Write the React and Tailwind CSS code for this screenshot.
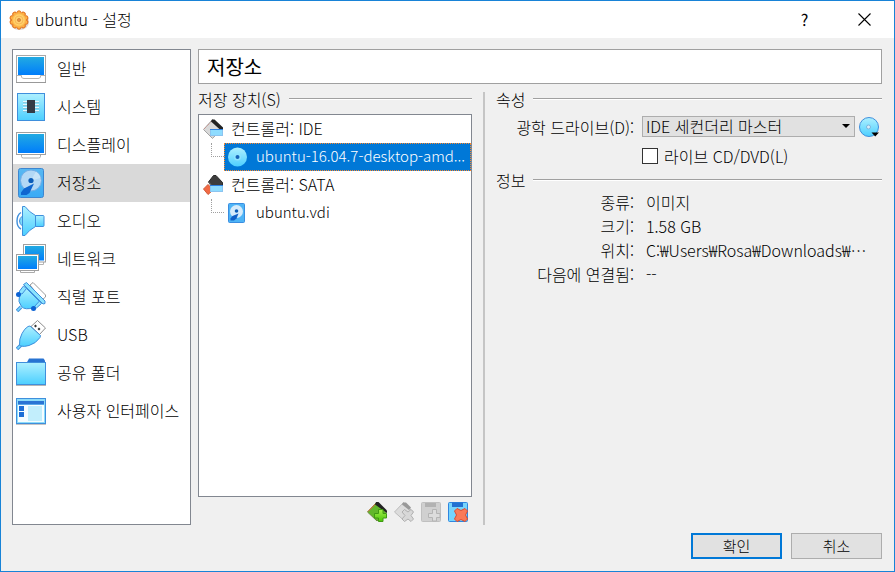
import React from 'react';

const BLUE = '#3f8fdc';

function Defs() {
  return (
    <svg width="0" height="0" className="absolute" aria-hidden="true">
      <defs>
        <linearGradient id="screen" x1="0" y1="0" x2="0" y2="1">
          <stop offset="0" stopColor="#22aae2" />
          <stop offset="1" stopColor="#007dfb" />
        </linearGradient>
        <linearGradient id="sky" x1="0" y1="0" x2="0" y2="1">
          <stop offset="0" stopColor="#aef0ff" />
          <stop offset="1" stopColor="#4ccfff" />
        </linearGradient>
        <linearGradient id="drive" x1="0" y1="0" x2="0" y2="1">
          <stop offset="0" stopColor="#58b8f2" />
          <stop offset="1" stopColor="#3aaaf5" />
        </linearGradient>
        <linearGradient id="green" x1="0" y1="0" x2="0" y2="1">
          <stop offset="0" stopColor="#a4f04a" />
          <stop offset="1" stopColor="#4cc40c" />
        </linearGradient>
        <radialGradient id="gear">
          <stop offset="0" stopColor="#ffe79a" />
          <stop offset="0.7" stopColor="#ffcf66" />
          <stop offset="1" stopColor="#f9a43a" />
        </radialGradient>
      </defs>
    </svg>
  );
}

function Icon({ size = 30, children }) {
  return (
    <svg width={size} height={size} viewBox={`0 0 ${size} ${size}`} className="block shrink-0" aria-hidden="true">
      {children}
    </svg>
  );
}

const GeneralIcon = () => (
  <Icon>
    <rect x="0.5" y="1.5" width="29" height="27" fill="#fff" stroke="#a8a8a8" />
    <rect x="2" y="3" width="26" height="18" fill="url(#screen)" />
    <path d="M1 21.5H5.5V23Q6 24.5 8 24.5H22Q24 24.5 24.5 23V21.5H29" fill="#fff" stroke="#b4b4b4" />
    <path d="M0 28.5H30" stroke="#999" />
  </Icon>
);

const SystemIcon = () => (
  <Icon>
    <rect x="1.5" y="1.5" width="27" height="27" fill="url(#sky)" stroke={BLUE} />
    <path d="M7 9.5H23M7 12.5H23M7 15.5H23M7 18.5H23" stroke="#e6f8ff" />
    <path d="M7 10.5H23M7 13.5H23M7 16.5H23M7 19.5H23" stroke="#8db4c6" strokeWidth="0.6" />
    <rect x="11" y="8" width="8" height="13" fill="#343b47" />
  </Icon>
);

const DisplayIcon = () => (
  <Icon>
    <path d="M5.5 24V26.5Q5.5 28 7.5 28H22.5Q24.5 28 24.5 26.5V24" fill="#fff" stroke="#aaa" />
    <rect x="0.5" y="2.5" width="29" height="22" fill="#fff" stroke="#a0a0a0" />
    <rect x="2" y="4" width="26" height="19" fill="url(#screen)" />
  </Icon>
);

const StorageIcon = () => (
  <Icon>
    <rect x="2.5" y="0.5" width="25" height="29" rx="2" fill="url(#drive)" stroke="#3d86d0" />
    <circle cx="15" cy="12.5" r="10.5" fill="#b3d8f5" stroke="#72ade6" />
    <path d="M15 12.5L20 3.5A10 10 0 0 1 24.5 10Z" fill="#d2e9fa" opacity="0.7" />
    <circle cx="15" cy="12.5" r="2.6" fill="#0b5cb8" />
    <path d="M18 15.5L8 20.5L5 24.5V27H10.5L13.5 25Z" fill="#0f66d0" />
  </Icon>
);

const AudioIcon = () => (
  <Icon>
    <path d="M5 6.5Q1 9 1 15T5 23" fill="none" stroke={BLUE} strokeWidth="1.4" />
    <path d="M6.5 10Q3.5 12 3.5 15T6.5 20Z" fill="#7edbfb" stroke={BLUE} />
    <rect x="19" y="9.5" width="9" height="11" rx="1" fill="url(#sky)" stroke={BLUE} />
    <path d="M6.5 0.5H9Q13 6 19.5 9.5V20.5Q13 24 9 29.5H6.5Z" fill="url(#sky)" stroke={BLUE} />
  </Icon>
);

const NetworkIcon = () => (
  <Icon>
    <path d="M21.5 18V20.5H27.5V18" fill="#fff" stroke="#b4b4b4" />
    <rect x="7.5" y="0.5" width="22" height="17.5" fill="#fff" stroke="#a0a0a0" />
    <rect x="9" y="2" width="19" height="14.5" fill="url(#screen)" />
    <path d="M4.5 26V28.5H18.5V26" fill="#fff" stroke="#aaa" />
    <rect x="0.5" y="10.5" width="22" height="16" fill="#fff" stroke="#a0a0a0" />
    <rect x="2" y="12" width="19" height="13" fill="url(#screen)" />
  </Icon>
);

const SerialIcon = () => (
  <Icon>
    <path d="M14 3L17 0.5L29.5 13V15L26 18Z" fill="#fff" stroke="#9a9a9a" />
    <path d="M5 25L1 29" stroke={BLUE} strokeWidth="3.6" />
    <path d="M5 25L1.5 28.5" stroke="#7ddcff" strokeWidth="1.6" />
    <path d="M10 6L23.500 19.500Q23 24 18 25.5Q9 28.500 5.5 24.500Q1.5 20 3.5 13.500Q6 7.500 10 6Z" fill="url(#sky)" stroke={BLUE} />
    <path d="M3.5 11.5V9L7.500 4L10.5 6.500L6 12ZM18.5 24.5L23.5 19L25.500 21.500L20.500 26Z" fill="#8de3ff" stroke={BLUE} />
    <path d="M7.5 2.5L10.5 0.5L29 19V21.500L27 22Z" fill="#8ae2fd" stroke={BLUE} />
    <circle cx="2.5" cy="12.5" r="2.5" fill="#0d63d4" />
    <circle cx="17.5" cy="26.5" r="2.5" fill="#0d63d4" />
  </Icon>
);

const UsbIcon = () => (
  <Icon>
    <path d="M21.5 0.5L29.5 8L23.5 14.5L15 6.5Z" fill="#fff" stroke="#8c8c8c" />
    <path d="M18 6L19.5 4.500L21 6L19.5 7.500ZM21.5 9L23 7.5L24.5 9L23 10.5Z" fill="#333" />
    <path d="M5 25L1 29" stroke={BLUE} strokeWidth="3.6" />
    <path d="M5 25L1.5 28.5" stroke="#7ddcff" strokeWidth="1.6" />
    <path d="M12 6.5L14 6L24.5 15.5L24 17.5Q20 23.5 13 25.5Q8 27 4.5 26L3.5 25Q3 19 6 13.5Q8.5 8.5 12 6.5Z" fill="url(#sky)" stroke={BLUE} />
  </Icon>
);

const FolderIcon = () => (
  <Icon>
    <path d="M10.5 5L13 0.5H27.5L29 2.5V6H10.5Z" fill="#2773d2" />
    <rect x="0.5" y="4.5" width="29" height="22" fill="url(#sky)" stroke={BLUE} />
    <path d="M0 27.5H30" stroke="#b5b5b5" />
  </Icon>
);

const InterfaceIcon = () => (
  <Icon>
    <rect x="0.5" y="2.5" width="29" height="25" fill="#8cdcfa" stroke={BLUE} />
    <rect x="2" y="5" width="26" height="3.5" fill="#2a74d4" />
    <rect x="2" y="9" width="26" height="17" fill="#f6fdff" />
    <rect x="3" y="10" width="5" height="5" fill="#1d6fd6" />
    <rect x="3" y="16" width="5" height="5" fill="#1d6fd6" />
    <rect x="12" y="10" width="14" height="15" fill="#c2eefc" />
    <path d="M0 28.5H30" stroke="#c4c4c4" />
  </Icon>
);

const IdeIcon = () => (
  <Icon size={20}>
    <path d="M9.5 0.5L19 9.5L9.5 19.5L0.5 10.5Z" fill="#d9d9d9" stroke="#a4a4a4" />
    <path d="M1 10L9.5 1.5" stroke="#d08a80" strokeDasharray="1 1" />
    <path d="M9 0.5H11.5L20 8.5V11L17.5 11L8 2.5Z" fill="#222" />
    <rect x="7.5" y="10.5" width="12" height="6" fill="#8edcff" stroke="#8cc4f0" />
    <path d="M7 10.5H20" stroke="#2c7fe0" />
  </Icon>
);

const SataIcon = () => (
  <Icon size={20}>
    <path d="M10.5 0.5H13L19.5 7.5V12H9L5.5 7Z" fill="#3d3d3d" stroke="#2a2a2a" />
    <path d="M5.500 7L9 11" stroke="#777" />
    <path d="M0.5 14L5 9.5L9 13.5V16L5 19.5Z" fill="#f26a44" stroke="#cf5a38" />
    <rect x="7.5" y="10.5" width="12" height="6" fill="#8edcff" stroke="#8cc4f0" />
    <path d="M7 10.5H20" stroke="#2c7fe0" />
  </Icon>
);

const DiscIcon = () => (
  <Icon size={20}>
    <circle cx="9.5" cy="10" r="9.5" fill="url(#sky)" />
    <circle cx="9.5" cy="10" r="3.5" fill="#8fe4ff" />
    <circle cx="9.5" cy="10" r="2" fill="#1663b8" />
  </Icon>
);

const DiskIcon = () => (
  <Icon size={20}>
    <rect x="0.5" y="0.5" width="16" height="19" rx="1" fill="#4eb4f6" stroke="#3a8de0" />
    <circle cx="8.5" cy="8.5" r="6.5" fill="#d5ebfb" />
    <circle cx="8.5" cy="8" r="1.8" fill="#0b5cb8" />
    <path d="M10.5 10.5L4.5 13L2.5 15.5V17.5H6L8.500 15.500Z" fill="#0f5fc8" />
  </Icon>
);

const AddControllerIcon = () => (
  <Icon size={20}>
    <path d="M9.5 0.5L19.5 10L10 19L0.5 10Z" fill="#62b72c" stroke="#6b8b42" />
    <path d="M1 9.5L9 1.5" stroke="#e06a3c" />
    <path d="M9 0H11.5L20 8.5V11L8 2.5Z" fill="#222" />
    <path d="M11.5 7.500H16V11.500H19.5V16H16V19.5H11.500V16H7.500V11.500H11.500Z" fill="url(#green)" stroke="#3f9a12" />
  </Icon>
);

const RemoveControllerIcon = () => (
  <Icon size={20}>
    <path d="M9.5 0.5L19 9.5L10 18.5L0.5 10Z" fill="#dcdcdc" stroke="#bcbcbc" />
    <path d="M9 0.5H12L17 5.5L15 8L8 2.5Z" fill="#999" />
    <path d="M10.5 7.5L14 10L17 7.5L19.5 10L17 13.500L19.5 17L17 19.5L14 17L10.500 19.5L8 17L11 13.500L8 10Z" fill="#d8d8d8" stroke="#b0b0b0" />
  </Icon>
);

const AddAttachmentIcon = () => (
  <Icon size={20}>
    <rect x="0.5" y="0.5" width="19" height="19" rx="1" fill="#d0d0d0" stroke="#c0c0c0" />
    <rect x="4" y="1" width="11" height="4" fill="#b2b2b2" />
    <path d="M11.500 7.5H15.5V11.5H19V15.500H15.5V19H11.500V15.500H7.500V11.5H11.500Z" fill="#dcdcdc" stroke="#b4b4b4" />
  </Icon>
);

const RemoveAttachmentIcon = () => (
  <Icon size={20}>
    <rect x="0.5" y="0.5" width="19" height="19" rx="1" fill="#76d4fc" stroke="#2f86e0" />
    <rect x="4" y="0.5" width="11" height="4.5" fill="#2270d0" />
    <path d="M9 6.5L13 8.5L17 6.5L19.5 9L17.5 13L19.5 17L17 19.5L13 17.5L9 19.5L6.5 17L8.5 13L6.5 9Z" fill="#f97a58" stroke="#e0492a" />
  </Icon>
);

const GearIcon = () => (
  <Icon size={20}>
    <ellipse cx="10.5" cy="12" rx="9.5" ry="8" fill="#b9a9a0" opacity="0.5" />
    {[0, 36, 72, 108, 144, 180, 216, 252, 288, 324].map((a) => (
      <circle key={a} cx="10" cy="2.8" r="2" fill="#ffb347" stroke="#e0701c" transform={`rotate(${a} 10 10)`} />
    ))}
    <circle cx="10" cy="10" r="7.4" fill="url(#gear)" />
    <circle cx="10" cy="10" r="4" fill="#ffd070" stroke="#f5b050" strokeWidth="0.8" />
    <circle cx="10" cy="10" r="1.6" fill="#e09048" stroke="#c97326" strokeWidth="0.6" />
  </Icon>
);

const categories = [
  ['일반', GeneralIcon],
  ['시스템', SystemIcon],
  ['디스플레이', DisplayIcon],
  ['저장소', StorageIcon],
  ['오디오', AudioIcon],
  ['네트워크', NetworkIcon],
  ['직렬 포트', SerialIcon],
  ['USB', UsbIcon],
  ['공유 폴더', FolderIcon],
  ['사용자 인터페이스', InterfaceIcon],
];

const tools = [
  ['컨트롤러 추가', AddControllerIcon, false],
  ['컨트롤러 삭제', RemoveControllerIcon, true],
  ['연결 추가', AddAttachmentIcon, true],
  ['연결 삭제', RemoveAttachmentIcon, false],
];

const details = [
  ['종류:', '이미지'],
  ['크기:', '1.58 GB'],
  ['위치:', 'C:₩Users₩Rosa₩Downloads₩⋯'],
  ['다음에 연결됨:', '--'],
];

function GroupTitle({ children }) {
  return (
    <div className="flex h-[14px] items-center gap-2">
      <h2 className="shrink-0 text-[16px] leading-none whitespace-nowrap">{children}</h2>
      <div className="h-[2px] flex-1 border-t border-[#a0a0a0] bg-white" />
    </div>
  );
}

function Controller({ icon: Glyph, label, children }) {
  return (
    <li role="treeitem" aria-expanded="true">
      <div className="flex h-7 items-center gap-2 pl-1">
        <Glyph />
        <span className="pb-0.5 text-[16px]">{label}</span>
      </div>
      <ul role="group">{children}</ul>
    </li>
  );
}

function Attachment({ icon: Glyph, label, selected }) {
  return (
    <li role="treeitem" aria-selected={!!selected} className="flex h-7 pl-3">
      <span className="h-[14px] w-[13px] shrink-0 border-b border-l border-dotted border-[#a0a0a0]" />
      <div
        className={
          selected
            ? 'flex min-w-0 flex-1 items-center gap-2 border border-dotted border-[#ff8728] bg-[#0078d7] pr-0.5 pl-[3px] text-white'
            : 'flex min-w-0 flex-1 items-center gap-2 border border-transparent pr-0.5 pl-[3px]'
        }
      >
        <Glyph />
        <span className="truncate pb-0.5 text-[15px]">{label}</span>
      </div>
    </li>
  );
}

export default function App() {
  return (
    <div
      lang="ko"
      className="flex min-h-screen flex-col border border-[#1883d7] bg-[#f0f0f0] font-['Noto_Sans_CJK_KR',sans-serif] text-[16px] font-light text-black"
    >
      <Defs />
      <header className="flex h-[37px] shrink-0 items-center bg-white pl-2">
        <GearIcon />
        <h1 className="flex-1 pb-0.5 pl-[6px] text-[16px] leading-none">ubuntu - 설정</h1>
        <button type="button" aria-label="도움말" className="flex h-full w-[59px] items-center justify-center pb-0.5 text-[16px] font-normal">
          ?
        </button>
        <button type="button" aria-label="닫기" className="flex h-full w-[60px] items-center justify-center">
          <svg width="13" height="13" viewBox="0 0 13 13" aria-hidden="true">
            <path d="M0.5 0.5L12.5 12.5M12.5 0.5L0.5 12.5" stroke="#000" strokeWidth="1.1" />
          </svg>
        </button>
      </header>

      <div className="flex flex-1 flex-col gap-2 pt-[11px] pr-3 pb-3 pl-[11px]">
        <div className="flex flex-1 gap-[7px]">
          <nav className="w-[179px] shrink-0 border border-[#828790] bg-white">
            <ul>
              {categories.map(([label, Glyph]) => (
                <li key={label}>
                  <button
                    type="button"
                    className={
                      label === '저장소'
                        ? 'flex h-[38px] w-full items-center gap-[11px] bg-[#d9d9d9] pl-[3px] text-left text-[16px] whitespace-nowrap'
                        : 'flex h-[38px] w-full items-center gap-[11px] pl-[3px] text-left text-[16px] whitespace-nowrap'
                    }
                  >
                    <Glyph />
                    <span className="pb-0.5">{label}</span>
                  </button>
                </li>
              ))}
            </ul>
          </nav>

          <main className="flex min-w-0 flex-1 flex-col gap-2">
            <div className="flex h-[35px] shrink-0 items-center border border-[#a0a0a0] bg-white pl-2 text-[20px] font-normal">
              저장소
            </div>
            <div className="flex flex-1">
              <section className="flex w-[274px] shrink-0 flex-col">
                <GroupTitle>저장 장치(S)</GroupTitle>
                <ul role="tree" aria-label="저장 장치" className="mt-2 flex-1 border border-[#828790] bg-white">
                  <Controller icon={IdeIcon} label="컨트롤러: IDE">
                    <Attachment icon={DiscIcon} label="ubuntu-16.04.7-desktop-amd..." selected />
                  </Controller>
                  <Controller icon={SataIcon} label="컨트롤러: SATA">
                    <Attachment icon={DiskIcon} label="ubuntu.vdi" />
                  </Controller>
                </ul>
                <div className="flex h-7 items-start justify-end gap-[7px] pt-[5px] pr-1">
                  {tools.map(([label, Glyph, disabled]) => (
                    <button key={label} type="button" aria-label={label} disabled={disabled}>
                      <Glyph />
                    </button>
                  ))}
                </div>
              </section>

              <div className="mx-[11px] w-[2px] shrink-0 bg-[#c5c5c5]" />

              <section className="min-w-0 flex-1">
                <GroupTitle>속성</GroupTitle>
                <div className="mt-[10px] flex items-center">
                  <label htmlFor="drive-slot" className="w-[138px] shrink-0 text-right leading-5 whitespace-nowrap">
                    광학 드라이브(D):
                  </label>
                  <div className="relative ml-2 flex-1">
                    <select
                      id="drive-slot"
                      className="block h-[21px] w-full appearance-none border border-[#adadad] bg-[#e1e1e1] pr-5 pb-0.5 pl-[3px] text-[16px] leading-[18px]"
                    >
                      <option>IDE 세컨더리 마스터</option>
                    </select>
                    <svg width="8" height="4" viewBox="0 0 8 4" className="pointer-events-none absolute top-2 right-[5px]" aria-hidden="true">
                      <path d="M0 0H8L4 4Z" fill="#000" />
                    </svg>
                  </div>
                  <button type="button" aria-label="디스크 선택" className="mr-[3px] ml-1">
                    <Icon size={20}>
                      <circle cx="10" cy="10" r="9.5" fill="url(#sky)" stroke={BLUE} />
                      <circle cx="9.5" cy="10" r="2" fill="#d7eefa" stroke="#7db4dc" />
                      <path d="M12.5 15.5H20L16.2 19.5Z" fill="#000" />
                    </Icon>
                  </button>
                </div>
                <label className="mt-[11px] ml-[146px] flex h-4 items-center gap-[6px] whitespace-nowrap">
                  <input type="checkbox" className="size-4 appearance-none border border-[#333] bg-white" />
                  <span className="text-[16px]">라이브 CD/DVD(L)</span>
                </label>
                <div className="mt-[9px]">
                  <GroupTitle>정보</GroupTitle>
                </div>
                <dl className="mt-[3px] grid grid-cols-[138px_minmax(0,1fr)] gap-x-3 text-[16px] leading-6">
                  {details.map(([name, value]) => (
                    <React.Fragment key={name}>
                      <dt className="text-right whitespace-nowrap">{name}</dt>
                      <dd className="overflow-hidden whitespace-nowrap">{value}</dd>
                    </React.Fragment>
                  ))}
                </dl>
              </section>
            </div>
          </main>
        </div>

        <footer className="flex justify-end gap-[9px]">
          <button type="button" className="h-[26px] w-[91px] border-2 border-[#0078d7] bg-[#e1e1e1] pb-0.5 text-[15px] leading-none">
            확인
          </button>
          <button type="button" className="h-[26px] w-[91px] border border-[#adadad] bg-[#e1e1e1] pb-0.5 text-[15px] leading-none">
            취소
          </button>
        </footer>
      </div>
    </div>
  );
}
